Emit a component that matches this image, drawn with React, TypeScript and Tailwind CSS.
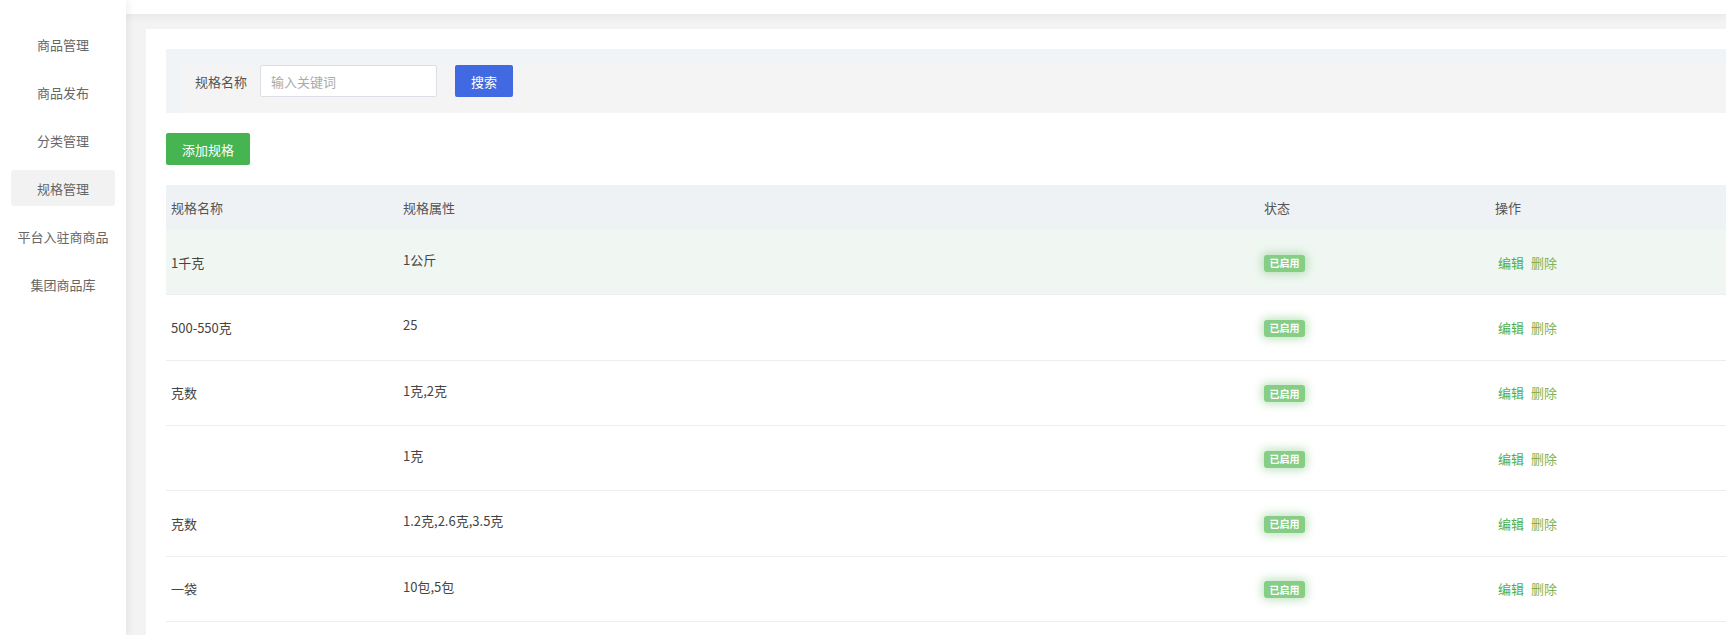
import React from "react";

const menu = ["商品管理", "商品发布", "分类管理", "规格管理", "平台入驻商商品", "集团商品库"];

const rows: { name: string; attr: string; hover?: boolean }[] = [
  { name: "1千克", attr: "1公斤", hover: true },
  { name: "500-550克", attr: "25" },
  { name: "克数", attr: "1克,2克" },
  { name: "", attr: "1克" },
  { name: "克数", attr: "1.2克,2.6克,3.5克" },
  { name: "一袋", attr: "10包,5包" },
];

export default function App() {
  return (
    <div className="flex h-[635px] w-full overflow-hidden bg-[#f3f3f3] font-['Noto_Sans_CJK_SC','Microsoft_YaHei',sans-serif] text-[13px]">
      {/* Sidebar */}
      <aside className="relative z-20 flex w-[126px] shrink-0 flex-col gap-[12px] bg-white pt-[26px] shadow-[2px_0_8px_rgba(0,0,0,0.07)]">
        {menu.map((m) => (
          <div
            key={m}
            className={
              "mx-[11px] flex h-[36px] items-center justify-center whitespace-nowrap rounded-[3px] text-[13px] leading-none text-[#666] " +
              (m === "规格管理" ? "bg-[#f2f2f2]" : "")
            }
          >
            {m}
          </div>
        ))}
      </aside>

      {/* Main */}
      <div className="flex min-w-0 flex-1 flex-col">
        <header className="relative z-10 h-[14px] shrink-0 bg-white shadow-[0_2px_8px_rgba(0,0,0,0.06)]" />
        <div className="flex flex-1 pl-[20px] pt-[15px]">
          <div className="flex min-w-0 flex-1 flex-col bg-white pl-[20px] pt-[20px]">
            {/* Search box */}
            <div className="bg-[#f1f4f7] pl-[15px] pt-[16px]">
              <div className="flex items-start bg-[#f4f4f4] pb-[16px]">
                <div className="flex h-[32px] items-center pl-[14px]">
                  <span className="leading-none text-[#555]">规格名称</span>
                  <div className="ml-[13px] flex h-[32px] w-[177px] items-center rounded-[2px] border border-[#dcdfe6] bg-white pl-[10px]">
                    <span className="leading-none text-[#aaa]">输入关键词</span>
                  </div>
                  <button className="ml-[18px] flex h-[32px] w-[58px] items-center justify-center rounded-[2px] bg-[#4169e1] leading-none text-white">
                    搜索
                  </button>
                </div>
              </div>
            </div>

            {/* Add button */}
            <div className="mt-[20px]">
              <button className="flex h-[32px] w-[84px] items-center justify-center rounded-[2px] bg-[#46b450] leading-none text-white">
                添加规格
              </button>
            </div>

            {/* Table */}
            <div className="mt-[20px]">
              <div className="grid h-[45px] grid-cols-[232px_861px_231px_1fr] items-center bg-[#eff2f5] pl-[5px] leading-none text-[#555]">
                <div>规格名称</div>
                <div>规格属性</div>
                <div>状态</div>
                <div>操作</div>
              </div>
              {rows.map((r, i) => (
                <div
                  key={i}
                  className={
                    "grid h-[65.33px] grid-cols-[232px_861px_231px_1fr] items-center border-b border-[#eeeeee] pl-[5px] leading-none text-[#444] " +
                    (r.hover ? "bg-[#f0f7f2]" : "bg-white")
                  }
                >
                  <div>{r.name}</div>
                  <div className="pb-[5px]">{r.attr}</div>
                  <div className="pt-[2px]">
                    <span className="flex h-[17px] w-[41px] items-center justify-center rounded-[3px] bg-[#86cd86] text-[10px] font-bold leading-none text-white shadow-[0_0_10px_2px_rgba(110,190,110,0.45)]">
                      已启用
                    </span>
                  </div>
                  <div className="flex items-center gap-[7px] pl-[3px]">
                    <span className="text-[#4caf50]">编辑</span>
                    <span className="text-[#7fb255]">删除</span>
                  </div>
                </div>
              ))}
              {/* next row, only its top edge in view */}
              <div className="grid h-[65.33px] grid-cols-[232px_861px_231px_1fr] items-center bg-white pl-[5px]">
                <div />
                <div />
                <div className="pt-[2px]">
                  <span className="block h-[17px] w-[41px] rounded-[3px] bg-[#86cd86] shadow-[0_0_10px_2px_rgba(110,190,110,0.45)]" />
                </div>
                <div />
              </div>
            </div>
          </div>
        </div>
      </div>
    </div>
  );
}
